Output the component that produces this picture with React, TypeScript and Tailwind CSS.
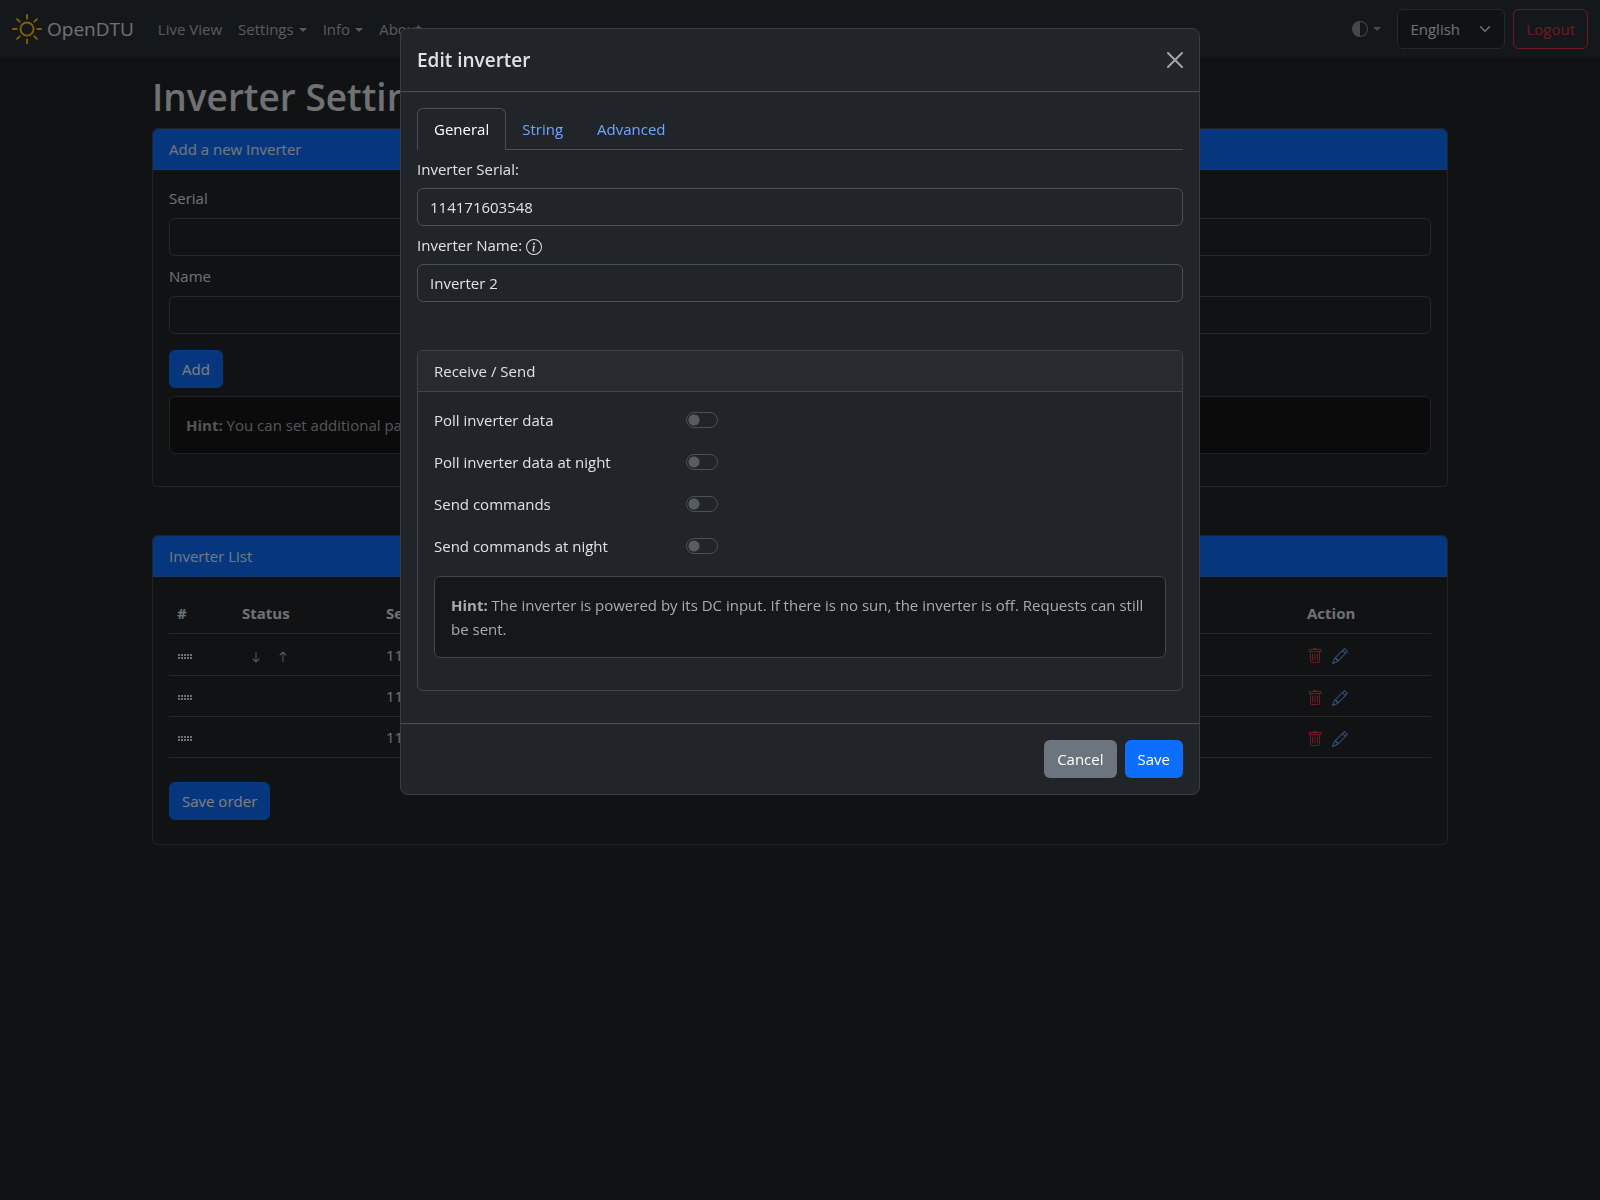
import type { ReactNode } from "react";
import { BsArrowDown, BsArrowUp, BsCircleHalf, BsInfoCircle, BsPencil, BsSun, BsTrash } from "react-icons/bs";

const field =
  "block h-[38px] w-full rounded-md border border-[#495057] bg-[#212529] px-3 text-[15px] leading-6 text-[#dee2e6] outline-none";
const primary = "h-[38px] rounded-md bg-[#0d6efd] px-[13px] text-[15px] leading-6 text-white";

function Caret() {
  return <span className="ml-[5px] inline-block border-x-4 border-t-4 border-x-transparent border-t-current align-[3px]" />;
}

function Grip() {
  return (
    <svg viewBox="0 0 14 5" className="mt-[3px] ml-px h-[5px] w-[14px]" fill="currentColor" shapeRendering="crispEdges">
      <path d="M0 0h2v2H0zM3 0h2v2H3zM6 0h2v2H6zM9 0h2v2H9zM12 0h2v2h-2zM0 3h2v2H0zM3 3h2v2H3zM6 3h2v2H6zM9 3h2v2H9zM12 3h2v2h-2z" />
    </svg>
  );
}

function Navbar() {
  return (
    <nav className="flex h-[57px] items-center bg-[#2b3035] px-3 text-[15px] text-[#dee2e6]/75">
      <a href="#" className="mr-6 flex items-center gap-[5px] text-[19px] leading-[30px] text-[#dee2e6]">
        <BsSun className="size-[30px] text-[#ffc107]" />
        OpenDTU
      </a>
      <ul className="flex gap-4">
        <li><a href="#">Live View</a></li>
        <li><a href="#">Settings<Caret /></a></li>
        <li><a href="#">Info<Caret /></a></li>
        <li><a href="#">About</a></li>
      </ul>
      <div className="ml-auto flex items-center gap-2">
        <button aria-label="Toggle theme" className="mr-2 flex items-center text-[#dee2e6]/55">
          <BsCircleHalf className="size-4" />
          <Caret />
        </button>
        <div className="relative">
          <select
            aria-label="Language"
            className="h-10 w-[108px] appearance-none rounded-md border border-[#495057] bg-[#212529] pl-3 text-[15px] text-[#dee2e6]"
          >
            <option>English</option>
          </select>
          <svg viewBox="0 0 16 16" className="pointer-events-none absolute top-[14px] right-[14px] size-3" fill="none" stroke="#dee2e6" strokeWidth="2" strokeLinecap="round" strokeLinejoin="round">
            <path d="m2 5 6 6 6-6" />
          </svg>
        </div>
        <button className="h-10 rounded-md border border-[#dc3545] px-3 text-[#dc3545]">Logout</button>
      </div>
    </nav>
  );
}

function PageCard({ title, children }: { title: string; children: ReactNode }) {
  return (
    <section className="overflow-hidden rounded-md border border-[#495057]/80">
      <h2 className="border-b border-[#3772ce] bg-[#0d6efd] px-4 py-2 text-[15px] leading-6 text-white/90">{title}</h2>
      <div className="p-4">{children}</div>
    </section>
  );
}

function Hint({ children }: { children: ReactNode }) {
  return (
    <div className="mb-4 rounded-md border border-[#41464b] bg-[#161719] p-4 text-[15px] leading-6 text-[#a7acb1]">
      <b>Hint:</b> {children}
    </div>
  );
}

const inverters = [
  { serial: "114171603546", name: "Inverter 1", type: "HM-600", ordered: true },
  { serial: "114171603548", name: "Inverter 2", type: "HM-600", ordered: false },
  { serial: "114171603550", name: "Inverter 3", type: "HM-600", ordered: false },
];

function InverterTable() {
  return (
    <table className="mb-6 w-full table-fixed text-left text-[15px] leading-6 text-[#dee2e6]">
      <thead>
        <tr className="border-b border-[#495057]">
          <th className="w-[65px] p-2">#</th>
          <th className="w-36 p-2">Status</th>
          <th className="p-2">Serial</th>
          <th className="p-2">Name</th>
          <th className="p-2">Type</th>
          <th className="w-[132px] p-2">Action</th>
        </tr>
      </thead>
      <tbody>
        {inverters.map((inv) => (
          <tr key={inv.serial} className="h-[41px] border-b border-[#495057] first:h-[42px]">
            <td className="px-2"><Grip /></td>
            <td className="px-2">
              {inv.ordered && (
                <span className="flex gap-[15px] pt-1 pl-2">
                  <BsArrowDown className="size-3" />
                  <BsArrowUp className="size-3" />
                </span>
              )}
            </td>
            <td className="px-2">{inv.serial}</td>
            <td className="px-2">{inv.name}</td>
            <td className="px-2">{inv.type}</td>
            <td className="px-2">
              <span className="flex items-center gap-[9px] pt-[3px]">
                <button aria-label="Delete inverter"><BsTrash className="size-4 text-[#dc3545]" /></button>
                <button aria-label="Edit inverter"><BsPencil className="size-4 text-[#6ea8fe]" /></button>
              </span>
            </td>
          </tr>
        ))}
      </tbody>
    </table>
  );
}

const switches = ["Poll inverter data", "Poll inverter data at night", "Send commands", "Send commands at night"];

function EditDialog() {
  return (
    <div role="dialog" aria-modal="true" aria-labelledby="dialog-title" className="w-full max-w-[800px] rounded-lg border border-[#393c40] bg-[#212529] text-[15px] leading-6 text-[#dee2e6]">
      <header className="flex items-center justify-between border-b border-[#495057] p-4">
        <h2 id="dialog-title" className="text-[19px] leading-[30px] font-semibold">Edit inverter</h2>
        <button aria-label="Close" className="text-[#a3a5a7]">
          <svg viewBox="0 0 16 16" className="size-4" stroke="currentColor" strokeWidth="2" strokeLinecap="round">
            <path d="m1 1 14 14M15 1 1 15" />
          </svg>
        </button>
      </header>
      <div className="p-4">
        <div role="tablist" className="flex border-b border-[#495057]">
          <button role="tab" aria-selected="true" className="-mb-px h-[42px] rounded-t-md border border-b-0 border-[#495057] bg-[#212529] px-4 pb-[2px] text-white">General</button>
          <button role="tab" aria-selected="false" className="px-4 text-[#6ea8fe]">String</button>
          <button role="tab" aria-selected="false" className="px-[18px] text-[#6ea8fe]">Advanced</button>
        </div>
        <label htmlFor="edit-serial" className="block py-[7px]">Inverter Serial:</label>
        <input id="edit-serial" className={field} defaultValue="114171603548" />
        <label htmlFor="edit-name" className="flex items-center gap-1 py-[7px]">
          Inverter Name: <BsInfoCircle className="mt-[3px] size-4" />
        </label>
        <input id="edit-name" className={field} defaultValue="Inverter 2" />
        <section className="mt-12 mb-4 overflow-hidden rounded-md border border-[#424649]">
          <h3 className="border-b border-[#424649] bg-[#272b2f] px-4 py-2">Receive / Send</h3>
          <div className="p-4">
            {switches.map((text, i) => (
              <div key={text} className="mb-[18px] flex items-center">
                <label htmlFor={`switch-${i}`} className="w-[252px]">{text}</label>
                <input
                  id={`switch-${i}`}
                  type="checkbox"
                  role="switch"
                  className="h-4 w-8 appearance-none rounded-full border border-[#495057] bg-[radial-gradient(circle_at_7px_7px,#595c5f_5px,transparent_6px)]"
                />
              </div>
            ))}
            <Hint>The inverter is powered by its DC input. If there is no sun, the inverter is off. Requests can still be sent.</Hint>
          </div>
        </section>
      </div>
      <footer className="flex justify-end gap-2 border-t border-[#495057] p-4">
        <button className="h-[38px] rounded-md bg-[#6c757d] px-[13px] text-white">Cancel</button>
        <button className={primary}>Save</button>
      </footer>
    </div>
  );
}

export default function App() {
  return (
    <div className="min-h-screen bg-[#212529] font-['Open_Sans','Noto_Sans',sans-serif] text-[15px] leading-6 text-[#dee2e6]">
      <Navbar />
      <main className="mx-auto max-w-[1320px] px-3 pt-4">
        <h1 className="mb-[7px] text-[37px] leading-[48px] font-semibold">Inverter Settings</h1>
        <PageCard title="Add a new Inverter">
          <label htmlFor="new-serial" className="mb-2 block">Serial</label>
          <input id="new-serial" className={field} />
          <label htmlFor="new-name" className="mt-2 mb-2 block">Name</label>
          <input id="new-name" className={field} />
          <button className={`${primary} mt-4 mb-2 block`}>Add</button>
          <Hint>You can set additional parameters after you have created the inverter. Use the pen icon in the inverter list.</Hint>
        </PageCard>
        <div className="mt-12">
          <PageCard title="Inverter List">
            <InverterTable />
            <button className={`${primary} mb-2 block`}>Save order</button>
          </PageCard>
        </div>
      </main>
      <div className="fixed inset-0 flex items-start justify-center overflow-auto bg-black/50 pt-7">
        <EditDialog />
      </div>
    </div>
  );
}
